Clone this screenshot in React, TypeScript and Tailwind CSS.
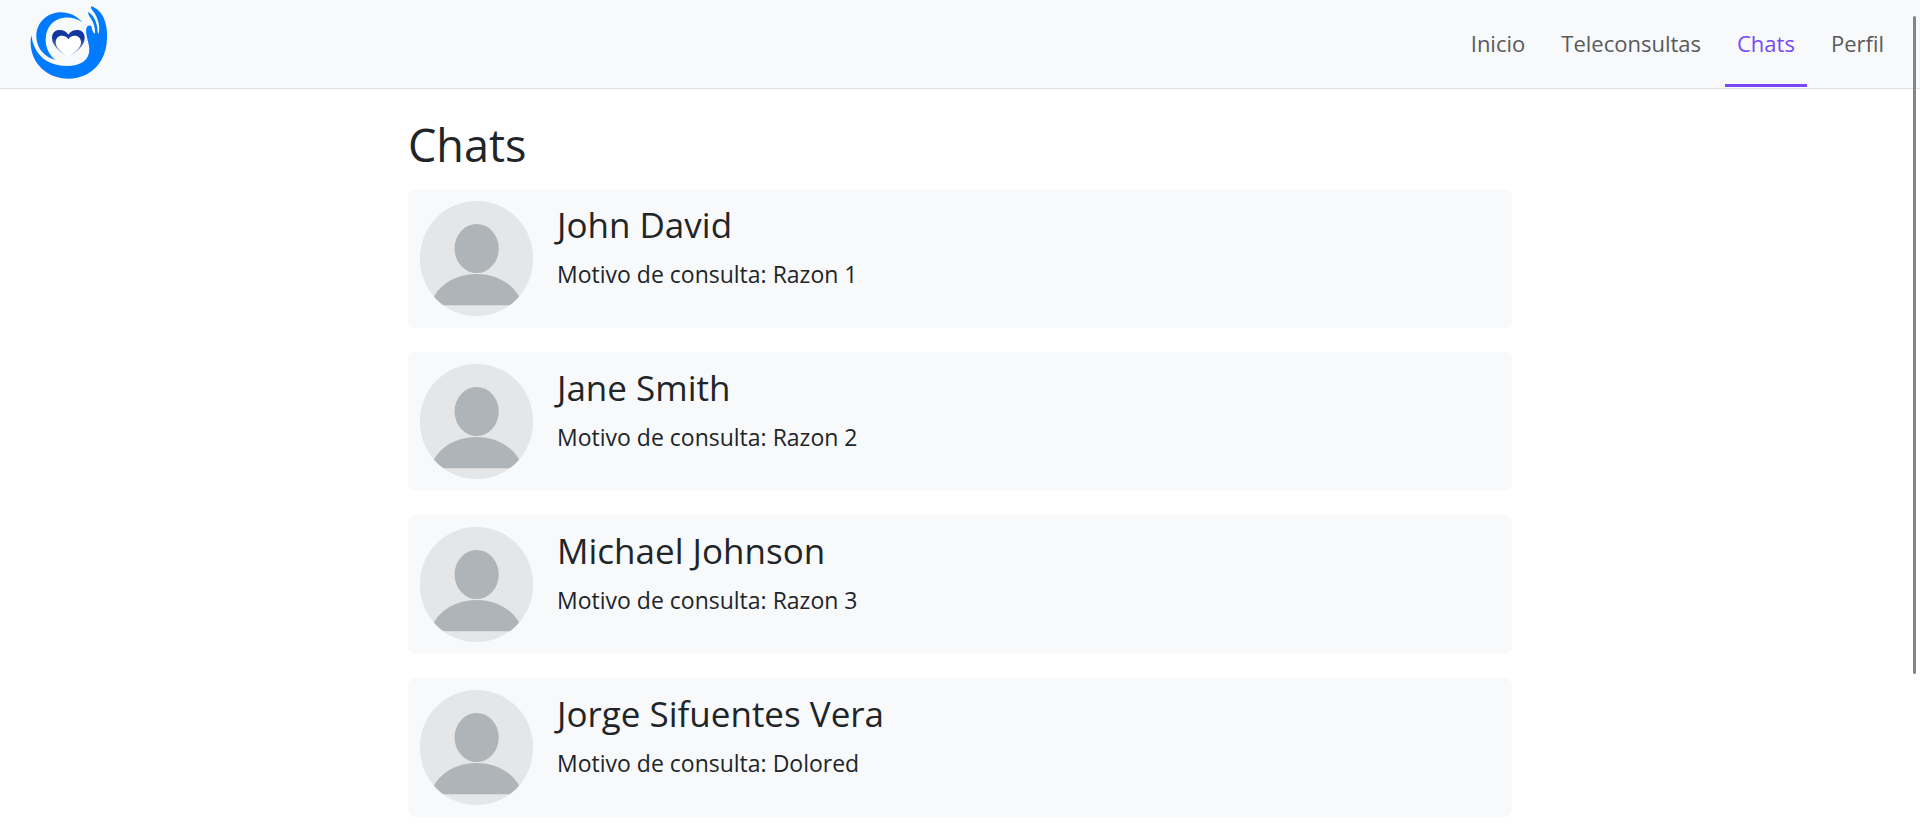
const links = ["Inicio", "Teleconsultas", "Chats", "Perfil"];

const chats = [
  { name: "John David", reason: "Razon 1" },
  { name: "Jane Smith", reason: "Razon 2" },
  { name: "Michael Johnson", reason: "Razon 3" },
  { name: "Jorge Sifuentes Vera", reason: "Dolored" },
];

function Logo() {
  return (
    <svg viewBox="30 0 240 240" className="size-20" aria-hidden="true">
      <defs>
        <linearGradient id="heart" x1="0" y1="0" x2="0" y2="1">
          <stop offset="0.3" stopColor="#1238a0" />
          <stop offset="0.65" stopColor="#5b74bd" />
          <stop offset="1" stopColor="#e8ecf6" />
        </linearGradient>
      </defs>
      <path
        fill="#007bff"
        d="M187 67C170 46 145 36 119 37C79 39 48 71 49 110C50 145 73 170 106 180C87 163 76 142 77 116C78 82 99 57 132 53C153 51 172 56 187 67Z"
      />
      <path
        fill="#007bff"
        d="M34 106C26 145 40 188 75 214C110 241 163 243 202 222C239 201 260 163 261 115C262 91 259 72 252 56C244 37 231 25 214 19C212 22 213 25 216 29C228 43 235 59 237 76C238 87 238 96 235 102C232 97 233 89 231 79C228 62 219 45 205 36C204 41 206 45 209 50C217 61 222 72 224 84C225 91 226 97 224 101C218 96 216 89 215 80C211 73 201 76 199 85C196 99 202 115 206 133C211 155 206 174 190 185C173 197 143 201 112 195C71 187 41 158 34 106Z"
      />
      <path
        fill="url(#heart)"
        d="M145 173C126 158 96 140 96 114C96 98 106 90 119 90C131 90 140 95 145 104C150 95 159 90 171 90C184 90 194 98 194 114C194 140 164 158 145 173Z"
      />
      <path
        fill="#fff"
        d="M145 173C128 158 107 145 107 127C107 115 115 107 126 107C135 107 141 111 145 118C149 111 155 107 164 107C175 107 183 115 183 127C183 145 162 158 145 173Z"
      />
    </svg>
  );
}

function Avatar() {
  return (
    <svg
      viewBox="0 0 340 345"
      preserveAspectRatio="none"
      className="h-[115px] w-[113px] shrink-0 rounded-full"
      aria-hidden="true"
    >
      <rect width="340" height="345" fill="#e4e6e7" />
      <ellipse cx="170.500" cy="142.500" rx="66.500" ry="73.500" fill="#aeb4b7" />
      <path d="M34 313V304C52 253 106 219 170 219C234 219 288 253 306 304V313Z" fill="#aeb4b7" />
    </svg>
  );
}

export default function App() {
  return (
    <div className="min-h-screen bg-white font-['Open_Sans','Noto_Sans',sans-serif] text-[#212529]">
      <header className="flex h-[89px] justify-between border-b border-[#dee2e6] bg-[#f8f9fa] pr-6 pl-[30px]">
        <a href="#inicio" aria-label="Inicio">
          <Logo />
        </a>
        <nav className="flex gap-3 pb-px text-[22px] leading-9">
          {links.map((link) => (
            <a
              key={link}
              href={`#${link.toLowerCase()}`}
              aria-current={link === "Chats" ? "page" : undefined}
              className={
                link === "Chats"
                  ? "flex items-center border-b-3 border-[#7749f8] px-3 pt-0.5 text-[#7749f8]"
                  : "flex items-center border-b-3 border-transparent px-3 pt-0.5 text-[#585a5c]"
              }
            >
              {link}
            </a>
          ))}
        </nav>
      </header>

      <main className="mx-auto max-w-[1104px] pt-6">
        <h1 className="mb-3 text-[45px] leading-[64px]">Chats</h1>
        <ul className="flex flex-col gap-6 pb-12">
          {chats.map((chat) => (
            <li key={chat.name} className="flex gap-6 rounded-lg bg-[#f8f9fa] p-3">
              <Avatar />
              <div>
                <h2 className="mb-2 text-[35px] leading-[47px]">{chat.name}</h2>
                <p className="text-[23px] leading-9">Motivo de consulta: {chat.reason}</p>
              </div>
            </li>
          ))}
        </ul>
      </main>

      <div className="fixed top-4 right-1 h-[658px] w-[3px] rounded-full bg-[#858585]" />
    </div>
  );
}
